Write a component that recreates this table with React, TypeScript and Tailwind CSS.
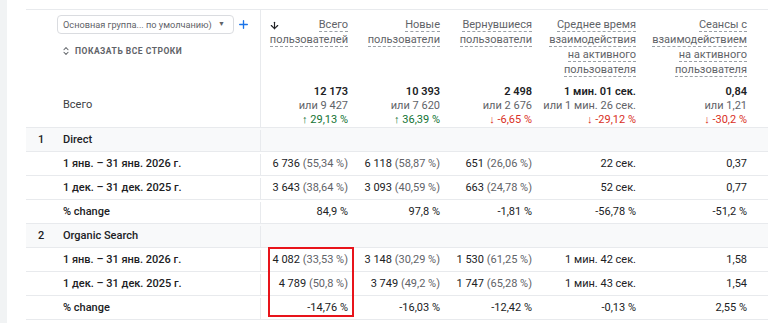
import { ArrowDown, ChevronsUpDown, Plus } from 'lucide-react';

type Cell = { v: string; p?: string };
type Row = { label: string; num?: string; group?: boolean; cells: Cell[] };

const HEAD = [
  ['Всего', 'пользователей'],
  ['Новые', 'пользователи'],
  ['Вернувшиеся', 'пользователи'],
  ['Среднее время', 'взаимодействия', 'на активного', 'пользователя'],
  ['Сеансы с', 'взаимодействием', 'на активного', 'пользователя'],
];

const TOTALS = [
  { v: '12 173', or: 'или 9 427', d: '29,13 %', up: true },
  { v: '10 393', or: 'или 7 620', d: '36,39 %', up: true },
  { v: '2 498', or: 'или 2 676', d: '-6,65 %', up: false },
  { v: '1 мин. 01 сек.', or: 'или 1 мин. 26 сек.', d: '-29,12 %', up: false },
  { v: '0,84', or: 'или 1,21', d: '-30,2 %', up: false },
];

const ROWS: Row[] = [
  { label: 'Direct', num: '1', group: true, cells: [] },
  { label: '1 янв. – 31 янв. 2026 г.', cells: [{ v: '6 736', p: '(55,34 %)' }, { v: '6 118', p: '(58,87 %)' }, { v: '651', p: '(26,06 %)' }, { v: '22 сек.' }, { v: '0,37' }] },
  { label: '1 дек. – 31 дек. 2025 г.', cells: [{ v: '3 643', p: '(38,64 %)' }, { v: '3 093', p: '(40,59 %)' }, { v: '663', p: '(24,78 %)' }, { v: '52 сек.' }, { v: '0,77' }] },
  { label: '% change', cells: [{ v: '84,9 %' }, { v: '97,8 %' }, { v: '-1,81 %' }, { v: '-56,78 %' }, { v: '-51,2 %' }] },
  { label: 'Organic Search', num: '2', group: true, cells: [] },
  { label: '1 янв. – 31 янв. 2026 г.', cells: [{ v: '4 082', p: '(33,53 %)' }, { v: '3 148', p: '(30,29 %)' }, { v: '1 530', p: '(61,25 %)' }, { v: '1 мин. 42 сек.' }, { v: '1,58' }] },
  { label: '1 дек. – 31 дек. 2025 г.', cells: [{ v: '4 789', p: '(50,8 %)' }, { v: '3 749', p: '(49,2 %)' }, { v: '1 747', p: '(65,28 %)' }, { v: '1 мин. 43 сек.' }, { v: '1,54' }] },
  { label: '% change', cells: [{ v: '-14,76 %' }, { v: '-16,03 %' }, { v: '-12,42 %' }, { v: '-0,13 %' }, { v: '2,55 %' }] },
];

const GRID = 'grid grid-cols-[235px_95px_92px_92px_104px_1fr]';

export default function App() {
  return (
    <div className="h-[323px] w-[768px] overflow-hidden bg-[#f1f3f4] pl-[7px] text-[#202124]" style={{ fontFamily: 'Roboto, "Noto Sans", sans-serif' }}>
      <div className="relative h-full bg-white pl-[19px] pt-[9px]">
        {/* header */}
        <div className={`${GRID} h-[119px] border-y border-[#e8eaed]`}>
          <div className="flex flex-col border-r border-[#e8eaed] pl-[31px] pt-[5px]">
            <div className="flex items-center">
              <div className="flex h-[19px] w-[177px] shrink-0 items-center justify-between overflow-hidden whitespace-nowrap rounded-[4px] border border-[#dadce0] pl-[5px] pr-[8px] text-[9.2px] text-[#5f6368]">
                <span>Основная группа... по умолчанию)</span>
                <span className="text-[7px] text-[#5f6368]">▼</span>
              </div>
              <Plus size={13} strokeWidth={2.5} className="ml-[3px] shrink-0 text-[#1a73e8]" />
            </div>
            <div className="mt-[11px] flex items-center gap-[4px] pl-[4px] text-[8.5px] font-bold tracking-[0.06em] text-[#5f6368]">
              <ChevronsUpDown size={10} strokeWidth={2.5} />
              <span>ПОКАЗАТЬ ВСЕ СТРОКИ</span>
            </div>
            <div className="mt-auto pb-[14px] pl-[6px] text-[11px] text-[#3c4043]">Всего</div>
          </div>
          {HEAD.map((lines, i) => (
            <div key={i} className={`relative flex flex-col items-end justify-between pt-[8px] ${i === 4 ? 'pr-[21px]' : 'pr-[8px]'}`}>
              {i === 0 && <ArrowDown size={11} strokeWidth={2.5} className="absolute left-[8px] top-[10px] text-[#202124]" />}
              <div className="flex flex-col items-end text-[11px] text-[#5f6368]">
                {lines.map((l) => (
                  <span key={l} className="mb-px border-b border-dashed border-[#9aa0a6] leading-[13px]">{l}</span>
                ))}
              </div>
              <div className="flex flex-col items-end text-[11px] leading-[14px]">
                <span className="font-semibold text-[#202124]">{TOTALS[i].v}</span>
                <span className="text-[#5f6368]">{TOTALS[i].or}</span>
                <span className={TOTALS[i].up ? 'text-[#137333]' : 'text-[#d93025]'}>
                  {TOTALS[i].up ? '↑' : '↓'} {TOTALS[i].d}
                </span>
              </div>
            </div>
          ))}
        </div>

        {/* rows */}
        {ROWS.map((r, ri) => (
          <div key={ri} className={`${GRID} h-[24px] border-b border-[#e8eaed] pt-[2px] text-[11px] ${r.group ? 'bg-[#f8f9fa]' : ''}`}>
            <div className="flex items-center border-r border-[#e8eaed] font-medium">
              <span className="w-[37px] pl-[12px]">{r.num}</span>
              <span>{r.label}</span>
            </div>
            {[0, 1, 2, 3, 4].map((ci) => {
              const c = r.cells[ci];
              return (
                <div key={ci} className={`flex items-center justify-end ${ci === 4 ? 'pr-[21px]' : 'pr-[8px]'}`}>
                  {c && (
                    <span>
                      {c.v}
                      {c.p && <span className="text-[#5f6368]"> {c.p}</span>}
                    </span>
                  )}
                </div>
              );
            })}
          </div>
        ))}

        <div className="absolute left-[261px] top-[247px] h-[70px] w-[86px] border-2 border-[#e8141b]" />
      </div>
    </div>
  );
}
